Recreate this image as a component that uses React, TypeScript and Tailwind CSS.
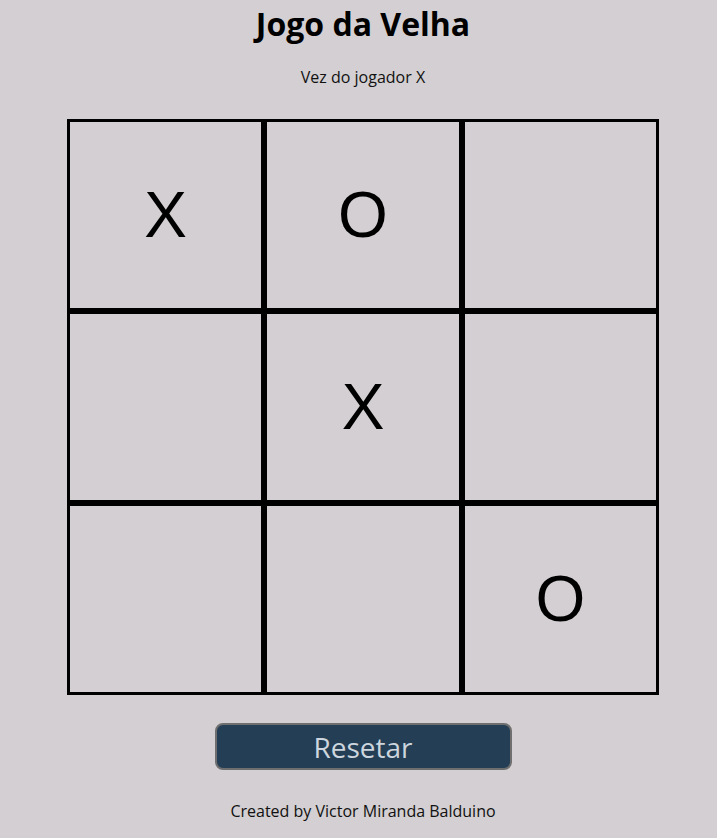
const board = ['X', 'O', '', '', 'X', '', '', '', 'O'];

export default function App() {
  return (
    <div className="min-h-[838px] bg-[#d3cfd2] pl-[9px] flex flex-col items-center font-['Open_Sans',sans-serif] text-black">
      <h1 className="mt-[2px] text-[32px] font-bold leading-[44px]">Jogo da Velha</h1>
      <p className="mt-[20px] text-[16px] leading-[22px] text-[#111]">Vez do jogador X</p>

      <div className="mt-[31px] grid grid-cols-3 w-[592px]">
        {board.map((cell, i) => (
          <div
            key={i}
            className="h-[192px] border-[3px] border-black flex items-center justify-center font-['Liberation_Sans'] text-[64px] leading-none"
          >
            {cell}
          </div>
        ))}
      </div>

      <button className="mt-[28px] w-[297px] h-[47px] rounded-[8px] border-2 border-[#6f6f70] bg-[#243f55] text-[28px] leading-none text-[#cdd5de]">
        Resetar
      </button>

      <p className="mt-[30px] text-[16px] leading-[22px] text-[#111]">Created by Victor Miranda Balduino</p>
    </div>
  );
}
